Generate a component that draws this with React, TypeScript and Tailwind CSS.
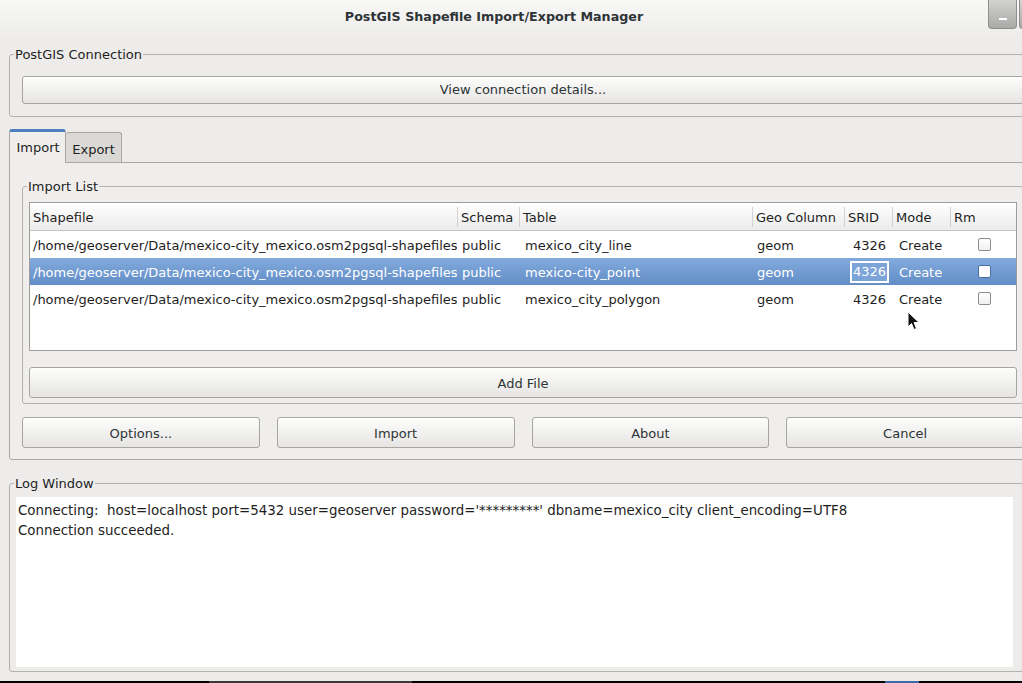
import React from "react";

const rows = [
  { path: "/home/geoserver/Data/mexico-city_mexico.osm2pgsql-shapefiles/mexico-city_mexico_osm_line.shp", table: "mexico_city_line" },
  { path: "/home/geoserver/Data/mexico-city_mexico.osm2pgsql-shapefiles/mexico-city_mexico_osm_point.shp", table: "mexico-city_point", selected: true },
  { path: "/home/geoserver/Data/mexico-city_mexico.osm2pgsql-shapefiles/mexico-city_mexico_osm_polygon.shp", table: "mexico_city_polygon" },
];

const cols = [
  { label: "Shapefile", w: "w-[427px]" },
  { label: "Schema", w: "w-[62px]" },
  { label: "Table", w: "w-[233px]" },
  { label: "Geo Column", w: "w-[92px]" },
  { label: "SRID", w: "w-[48px]" },
  { label: "Mode", w: "w-[58px]" },
  { label: "Rm", w: "flex-1" },
];

function GtkButton({ label, className = "" }: { label: string; className?: string }) {
  return (
    <button
      type="button"
      className={[
        "flex items-center justify-center rounded-[3px] border border-[#a7a5a0] bg-gradient-to-b from-[#fdfdfc] to-[#e6e5e3] text-[13px] text-[#2e3436] shadow-[inset_0_1px_0_#ffffff]",
        className,
      ].join(" ")}
    >
      {label}
    </button>
  );
}

function Check({ selected }: { selected?: boolean }) {
  return (
    <span
      className={[
        "block h-[13px] w-[13px] rounded-[2px] border",
        selected ? "border-[#4a6f9f] bg-white" : "border-[#8c8c8c] bg-gradient-to-b from-white to-[#f0f0f0]",
      ].join(" ")}
    />
  );
}

export default function App() {
  return (
    <div className="relative h-[683px] w-[1022px] overflow-hidden bg-black font-['DejaVu_Sans',sans-serif] text-[13px] leading-4 text-[#1e1e1e]">
      <div className="flex h-[681px] w-[1046px] flex-col bg-[#edeceb]">
        {/* title bar */}
        <div className="flex h-[40px] shrink-0 bg-gradient-to-b from-[#f7f7f6] to-[#edeceb]">
          <div className="flex h-[34px] flex-1 items-center justify-center text-[12.7px] font-bold text-[#2e3436]">
            PostGIS Shapefile Import/Export Manager
          </div>
          <div className="flex h-[29px] gap-[2px]">
            <div className="flex w-[29px] items-end justify-center rounded-b-[4px] border border-t-0 border-[#8e8e8c] bg-gradient-to-b from-[#d3d3d1] to-[#a9a9a7] pb-[8px]">
              <span className="block h-[2px] w-[8px] bg-white" />
            </div>
            <div className="w-[27px] rounded-b-[4px] border border-t-0 border-[#8e8e8c] bg-gradient-to-b from-[#d3d3d1] to-[#a9a9a7]" />
          </div>
        </div>

        <div className="flex flex-1 flex-col px-[9px]">
          {/* connection frame */}
          <fieldset className="mt-[6px] rounded-[3px] border border-[#b4b2ad] px-[12px] pb-[12px]">
            <legend className="-ml-[8px] px-[1px] leading-[17px]">PostGIS Connection</legend>
            <GtkButton label="View connection details..." className="mt-[13px] h-[28px] w-full" />
          </fieldset>

          {/* tabs */}
          <div className="mt-[12px] flex h-[33px] items-end">
            <div className="relative z-10 -mb-px flex h-[34px] w-[57px] items-center justify-center rounded-t-[3px] border border-b-0 border-[#a9a7a3] border-t-[3px] border-t-[#4d7fc1] bg-[#efeeed] pl-px">
              Import
            </div>
            <div className="flex h-[30px] w-[56px] items-center justify-center rounded-t-[3px] border border-b-0 border-l-0 border-[#a9a7a3] bg-[#dad9d6] pt-[4px]">
              Export
            </div>
          </div>
          <div className="flex flex-col rounded-b-[3px] border border-[#a9a7a3] bg-[#efeeed] px-[12px] pb-[11px] pt-[15px]">
            <fieldset className="rounded-[3px] border border-[#b4b2ad] px-[6px] pb-[5px]">
              <legend className="-ml-[2px] px-[1px] leading-[17px]">Import List</legend>
              <div className="mt-[7px] flex h-[149px] flex-col border border-[#9f9d99] bg-white">
                <div className="flex h-[28px] border-b border-[#c4c4c4] bg-gradient-to-b from-white to-[#ebebeb]">
                  {cols.map((c, i) => (
                    <div key={c.label} className={["flex items-center pt-[2px]", c.w].join(" ")}>
                      {i > 0 && <span className="-mt-[2px] h-[20px] w-px bg-[#d2d2d2]" />}
                      <span className="pl-[3px]">{c.label}</span>
                    </div>
                  ))}
                </div>
                {rows.map((r) => (
                  <div
                    key={r.table}
                    className={[
                      "flex h-[27px] items-center whitespace-nowrap pt-[2px]",
                      r.selected ? "bg-gradient-to-b from-[#82aadd] to-[#628dc6] text-white" : "",
                    ].join(" ")}
                  >
                    <div className="w-[427px] overflow-hidden pl-[3px]">{r.path}</div>
                    <div className="w-[62px] pl-[5px]">public</div>
                    <div className="w-[233px] pl-[6px]">{r.table}</div>
                    <div className="w-[92px] pl-[5px]">geom</div>
                    <div className="flex w-[48px] justify-end pr-[6px]">
                      {r.selected ? (
                        <span className="-mr-[3px] -mt-[2px] bg-white p-[2px]">
                          <span className="block bg-[#7ca4d9] px-px leading-[18px] text-white">4326</span>
                        </span>
                      ) : (
                        "4326"
                      )}
                    </div>
                    <div className="w-[58px] pl-[7px]">Create</div>
                    <div className="-mt-[2px] flex flex-1 pl-[28px]">
                      <Check selected={r.selected} />
                    </div>
                  </div>
                ))}
              </div>
              <GtkButton label="Add File" className="mt-[16px] h-[31px] w-full pt-[2px]" />
            </fieldset>
            <div className="mt-[13px] grid h-[31px] grid-cols-4 gap-[17px]">
              <GtkButton label="Options..." className="pt-[2px]" />
              <GtkButton label="Import" className="pt-[2px]" />
              <GtkButton label="About" className="pt-[2px]" />
              <GtkButton label="Cancel" className="pt-[2px]" />
            </div>
          </div>

          {/* log window */}
          <fieldset className="mt-[15px] rounded-[3px] border border-[#b4b2ad] px-[6px] pb-[4px]">
            <legend className="-ml-[2px] px-[1px] leading-[17px]">Log Window</legend>
            <div className="mt-[5px] h-[170px] w-[997px] whitespace-pre bg-white pl-[2px] pt-[4px] text-[13.4px] leading-[20px]">
              <div>Connecting:  host=localhost port=5432 user=geoserver password='*********' dbname=mexico_city client_encoding=UTF8</div>
              <div>Connection succeeded.</div>
            </div>
          </fieldset>
        </div>
      </div>

      {/* taskbar edge */}
      <div className="flex h-[2px]">
        <div className="w-[209px]" />
        <div className="w-[203px] bg-[#3a3a3a]" />
        <div className="w-[473px]" />
        <div className="w-[34px] bg-[#3f6aa8]" />
      </div>

      {/* mouse pointer */}
      <svg className="absolute left-[907px] top-[311px]" width="13" height="20" viewBox="0 0 13 20">
        <path d="M1 1 L1 16 L4.5 12.5 L7 18.5 L9.5 17.5 L7 11.5 L12 11.5 Z" fill="#111" stroke="#fff" strokeWidth="1" strokeLinejoin="round" />
      </svg>
    </div>
  );
}
